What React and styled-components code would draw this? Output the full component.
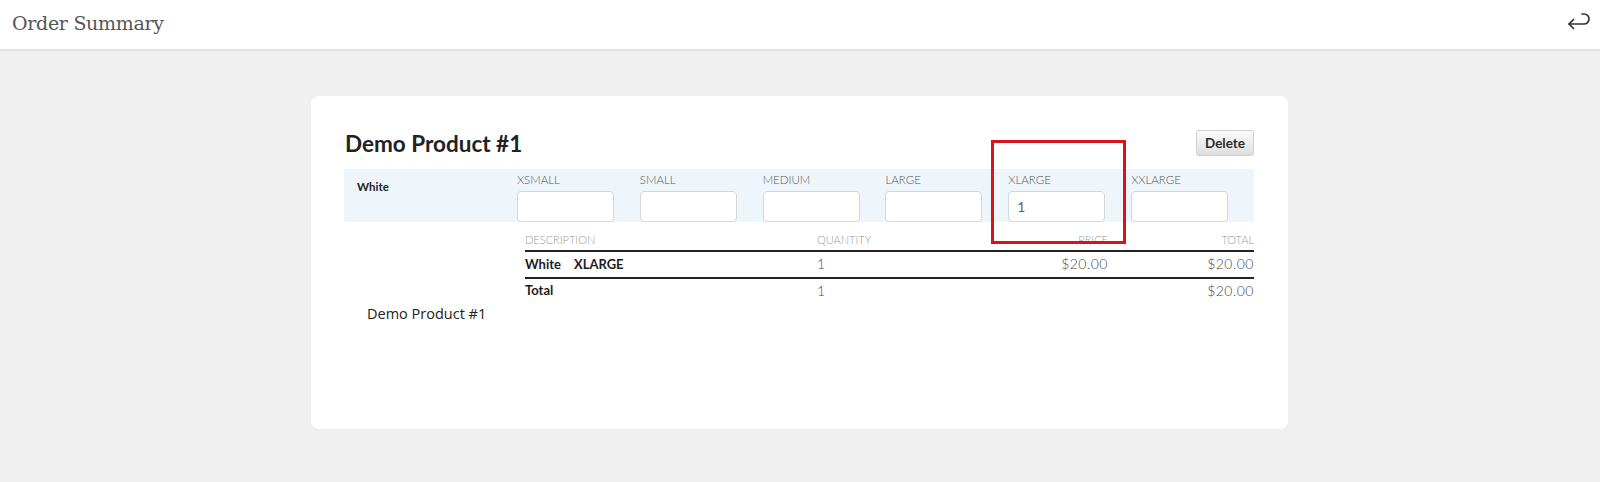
import styled, { createGlobalStyle } from "styled-components";

const sizes = ["XSMALL", "SMALL", "MEDIUM", "LARGE", "XLARGE", "XXLARGE"];
const values = { XLARGE: "1" };

export default function App() {
  return (
    <>
      <GlobalStyle />
      <Header>
        <Title>Order Summary</Title>
        <BackButton aria-label="back">
          <svg width="26" height="20" viewBox="0 0 26 20" fill="none">
            <path
              d="M3 14 H18 a5 5 0 0 0 0 -10 H16"
              stroke="#333"
              strokeWidth="1.7"
              strokeLinecap="round"
            />
            <path
              d="M7.5 9.5 L3 14 L7.5 18.5"
              stroke="#333"
              strokeWidth="1.7"
              strokeLinecap="round"
              strokeLinejoin="round"
            />
          </svg>
        </BackButton>
      </Header>
      <Main>
        <Card>
          <ProductHead>
            <ProductName>Demo Product #1</ProductName>
            <DeleteButton>Delete</DeleteButton>
          </ProductHead>
          <ColorRow>
            <ColorName>White</ColorName>
            {sizes.map((s) => (
              <SizeCell key={s}>
                <SizeLabel>{s}</SizeLabel>
                <QtyInput defaultValue={values[s] || ""} />
              </SizeCell>
            ))}
          </ColorRow>
          <Table>
            <HeadCell>DESCRIPTION</HeadCell>
            <HeadCell>QUANTITY</HeadCell>
            <HeadCell $right>PRICE</HeadCell>
            <HeadCell $right>TOTAL</HeadCell>

            <Cell $bold $line>
              White<Gap />XLARGE
            </Cell>
            <Cell $line>1</Cell>
            <Cell $right $line>$20.00</Cell>
            <Cell $right $line>$20.00</Cell>

            <Cell $bold>Total</Cell>
            <Cell>1</Cell>
            <Cell $right></Cell>
            <Cell $right>$20.00</Cell>
          </Table>
          <Caption>Demo Product #1</Caption>
          <Highlight />
        </Card>
      </Main>
    </>
  );
}

const GlobalStyle = createGlobalStyle`
  html, body {
    margin: 0;
    background: #f0f0f0;
    font-family: "Lato", "Open Sans", sans-serif;
  }
`;

const Header = styled.header`
  height: 49px;
  background: #fff;
  border-bottom: 2px solid #e3e3e3;
  display: flex;
  align-items: center;
  justify-content: space-between;
  padding: 0 8px 0 12px;
`;

const Title = styled.h1`
  margin: -3px 0 0;
  font-family: "DejaVu Serif", serif;
  font-weight: 300;
  font-size: 19px;
  letter-spacing: -0.3px;
  color: #555;
`;

const BackButton = styled.div`
  display: flex;
  margin-top: -9px;
`;

const Main = styled.main`
  padding: 45px 0 0 311px;
`;

const Card = styled.section`
  position: relative;
  width: 977px;
  height: 333px;
  box-sizing: border-box;
  background: #fff;
  border-radius: 8px;
  padding: 34px 34px 0 33px;
`;

const ProductHead = styled.div`
  display: flex;
  align-items: center;
  justify-content: space-between;
  height: 26px;
  margin-bottom: 13px;
`;

const ProductName = styled.h2`
  margin: 0 0 0 1px;
  font-family: "Lato", sans-serif;
  font-weight: 700;
  font-size: 22.5px;
  color: #222;
`;

const DeleteButton = styled.button`
  width: 58px;
  height: 26px;
  border: 1px solid #d0d0d0;
  border-radius: 3px;
  background: linear-gradient(#fbfbfb, #dedede);
  font-family: "Lato", sans-serif;
  font-weight: 700;
  font-size: 13.5px;
  color: #2a2a2a;
  padding: 0;
`;

const ColorRow = styled.div`
  display: flex;
  height: 53px;
  background: #eef6fc;
`;

const ColorName = styled.div`
  width: 173px;
  padding: 10px 0 0 13px;
  box-sizing: border-box;
  font-family: "Lato", sans-serif;
  font-weight: 700;
  font-size: 11.5px;
  line-height: 15px;
  color: #222;
`;

const SizeCell = styled.div`
  width: 122.9px;
  display: flex;
  flex-direction: column;
  padding-top: 3px;
`;

const SizeLabel = styled.span`
  font-family: "Lato", sans-serif;
  font-weight: 300;
  font-size: 11.5px;
  line-height: 16px;
  color: #555;
  height: 19px;
`;

const QtyInput = styled.input`
  width: 97px;
  height: 31px;
  box-sizing: border-box;
  border: 1px solid #d6d6d6;
  border-radius: 4px;
  background: #fff;
  padding: 0 8px;
  font-family: "Lato", sans-serif;
  font-weight: 400;
  font-size: 14px;
  color: #666;
  outline: none;
`;

const Table = styled.div`
  display: grid;
  grid-template-columns: 292px 150px 141px 146px;
  margin: 8px 0 0 181px;
  font-family: "Lato", sans-serif;
`;

const HeadCell = styled.div`
  font-size: 11px;
  font-weight: 300;
  color: #999;
  height: 20px;
  line-height: 20px;
  border-bottom: 2px solid #222;
  text-align: ${(p) => (p.$right ? "right" : "left")};
`;

const Cell = styled.div`
  font-size: ${(p) => (p.$bold ? "13px" : "14px")};
  font-weight: ${(p) => (p.$bold ? 700 : 300)};
  letter-spacing: ${(p) => (p.$bold ? "0" : "0.5px")};
  color: ${(p) => (p.$bold ? "#1d1d1d" : "#4a4a4a")};
  height: ${(p) => (p.$line ? "24.5px" : "23px")};
  line-height: ${(p) => (p.$line ? "24.5px" : "23px")};
  text-align: ${(p) => (p.$right ? "right" : "left")};
  border-bottom: ${(p) => (p.$line ? "2px solid #222" : "none")};
`;

const Gap = styled.span`
  display: inline-block;
  width: 13px;
`;

const Caption = styled.p`
  margin: 2px 0 0 23px;
  font-family: "Open Sans", sans-serif;
  font-size: 14.5px;
  color: #222;
`;

const Highlight = styled.div`
  position: absolute;
  left: 680px;
  top: 44px;
  width: 135px;
  height: 104px;
  box-sizing: border-box;
  border: 3px solid #d7141c;
  pointer-events: none;
`;
